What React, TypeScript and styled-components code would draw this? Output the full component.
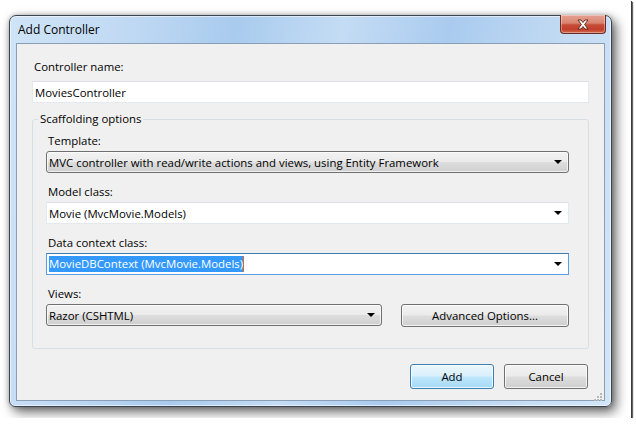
import React from 'react';
import styled, { createGlobalStyle } from 'styled-components';

const GlobalStyle = createGlobalStyle`
  html, body {
    margin: 0;
    padding: 0;
    background: #ffffff;
  }
  body {
    font-family: "Open Sans", "Noto Sans", "Liberation Sans", sans-serif;
    font-size: 11.4px;
    color: #000000;
  }
`;

const Stage = styled.div`
  box-sizing: border-box;
  width: 631px;
  height: 418px;
  padding: 15px 0 0 9px;
  background: #ffffff;
  box-shadow: 1px 1px 0 #3a3a3a, 2px 2px 1px rgba(0, 0, 0, 0.6);
`;

const Window = styled.div`
  box-sizing: border-box;
  width: 603px;
  height: 392px;
  display: flex;
  flex-direction: column;
  padding: 0 6px 5px 6px;
  border: 1px solid #3b4550;
  border-radius: 7px 7px 6px 6px;
  background: linear-gradient(
    100deg,
    #cfe4f7 0%,
    #c0d9f3 18%,
    #a9cbee 34%,
    #c4dcf4 50%,
    #aacbef 66%,
    #c3dbf3 84%,
    #d3e6f8 100%
  );
  box-shadow: inset 0 0 0 1px rgba(255, 255, 255, 0.55),
    4px 5px 12px rgba(0, 0, 0, 0.6), 0 0 5px rgba(0, 0, 0, 0.25);
`;

const TitleBar = styled.div`
  position: relative;
  height: 27px;
  display: flex;
  align-items: center;
  padding-left: 2px;
  font-size: 12px;
  color: #000000;
`;

const CloseButton = styled.div`
  position: absolute;
  top: -1px;
  right: -1px;
  width: 46px;
  height: 19px;
  box-sizing: border-box;
  display: flex;
  align-items: center;
  justify-content: center;
  border: 1px solid #6b2a22;
  border-top: none;
  border-radius: 0 0 4px 4px;
  background: linear-gradient(
    180deg,
    #e6a292 0%,
    #d98370 45%,
    #c54c36 55%,
    #c1402b 80%,
    #d4694f 100%
  );
  box-shadow: inset 0 0 0 1px rgba(255, 255, 255, 0.35);
`;

const Client = styled.div`
  box-sizing: border-box;
  flex: 1;
  display: flex;
  flex-direction: column;
  padding: 15px 15px 0 15px;
  background: #f0f0f0;
  border: 1px solid #8a9fb6;
`;

const Label = styled.div`
  height: 16px;
  line-height: 16px;
  padding-left: 2px;
  white-space: nowrap;
`;

const TextBox = styled.div`
  box-sizing: border-box;
  height: 22px;
  margin-top: 6px;
  display: flex;
  align-items: center;
  padding-left: 2px;
  background: #ffffff;
  border: 1px solid #e3e9ef;
  border-top-color: #dcdfe6;
  white-space: nowrap;
`;

const GroupBox = styled.fieldset`
  margin: 8px 0 0 0;
  padding: 6px 19px 21px 13px;
  border: 1px solid #d5dfe5;
  border-radius: 3px;
  display: flex;
  flex-direction: column;
  gap: 11px;
`;

const Legend = styled.legend`
  margin-left: -8px;
  padding: 0 2px;
  height: 16px;
  line-height: 16px;
`;

const Field = styled.div`
  display: flex;
  flex-direction: column;
  gap: 2px;
`;

const Combo = styled.div<{ $button?: boolean; $focused?: boolean }>`
  position: relative;
  box-sizing: border-box;
  height: 22px;
  display: flex;
  align-items: center;
  padding-left: 2px;
  white-space: nowrap;
  border: 1px solid ${(p) => (p.$button ? '#707070' : p.$focused ? '#569de5' : '#e3e9ef')};
  border-top-color: ${(p) => (p.$button ? '#707070' : p.$focused ? '#3d7bad' : '#dcdfe6')};
  border-radius: ${(p) => (p.$button ? '3px' : '0')};
  background: ${(p) =>
    p.$button
      ? 'linear-gradient(180deg, #f2f2f2 0%, #ebebeb 48%, #dddddd 52%, #cfcfcf 100%)'
      : '#ffffff'};
  box-shadow: ${(p) => (p.$button ? 'inset 0 0 0 1px rgba(255,255,255,0.7)' : 'none')};
`;

const Arrow = styled.span`
  position: absolute;
  right: 6px;
  top: 50%;
  margin-top: -2px;
  width: 0;
  height: 0;
  border-left: 4px solid transparent;
  border-right: 4px solid transparent;
  border-top: 4px solid #000000;
`;

const Selected = styled.span`
  background: #3399ff;
  color: #ffffff;
  line-height: 16px;
  border-right: 1px solid #d86a1a;
`;

const ViewsRow = styled.div`
  display: grid;
  grid-template-columns: 336px 1fr;
  gap: 19px;
`;

const PushButton = styled.div<{ $default?: boolean }>`
  box-sizing: border-box;
  height: 23px;
  display: flex;
  align-items: center;
  justify-content: center;
  border: 1px solid ${(p) => (p.$default ? '#3c7fb1' : '#707070')};
  border-radius: 3px;
  background: ${(p) =>
    p.$default
      ? 'linear-gradient(180deg, #eaf6fd 0%, #d9f0fc 48%, #bee6fd 52%, #a7d9f5 100%)'
      : 'linear-gradient(180deg, #f2f2f2 0%, #ebebeb 48%, #dddddd 52%, #cfcfcf 100%)'};
  box-shadow: inset 0 0 0 1px rgba(255, 255, 255, 0.75);
`;

const Footer = styled.div`
  position: relative;
  margin-top: 15px;
  display: flex;
  justify-content: flex-end;
  gap: 10px;
  padding-right: 1px;
`;

const DialogButton = styled(PushButton)`
  width: 84px;
  height: 25px;
`;

const Grip = styled.svg`
  position: absolute;
  right: -14px;
  bottom: -13px;
`;

const CloseIcon = () => (
  <svg width="14" height="11" viewBox="0 0 14 11">
    <path
      d="M2 1 L5 1 L7 3.5 L9 1 L12 1 L8.6 5.5 L12 10 L9 10 L7 7.5 L5 10 L2 10 L5.4 5.5 Z"
      fill="#ffffff"
      stroke="#5a1e16"
      strokeWidth="0.9"
      strokeLinejoin="round"
    />
  </svg>
);

const SizeGrip = () => (
  <Grip width="10" height="10" viewBox="0 0 10 10">
    {[
      [7, 1],
      [4, 4],
      [7, 4],
      [1, 7],
      [4, 7],
      [7, 7],
    ].map(([x, y]) => (
      <rect key={`${x}-${y}`} x={x} y={y} width="2" height="2" fill="#b8b8b8" />
    ))}
  </Grip>
);

const App = () => {
  return (
    <>
      <GlobalStyle />
      <Stage>
        <Window>
          <TitleBar>
            Add Controller
            <CloseButton>
              <CloseIcon />
            </CloseButton>
          </TitleBar>
          <Client>
            <Label>Controller name:</Label>
            <TextBox>MoviesController</TextBox>
            <GroupBox>
              <Legend>Scaffolding options</Legend>
              <Field>
                <Label>Template:</Label>
                <Combo $button>
                  MVC controller with read/write actions and views, using Entity Framework
                  <Arrow />
                </Combo>
              </Field>
              <Field>
                <Label>Model class:</Label>
                <Combo>
                  Movie (MvcMovie.Models)
                  <Arrow />
                </Combo>
              </Field>
              <Field>
                <Label>Data context class:</Label>
                <Combo $focused>
                  <Selected>MovieDBContext (MvcMovie.Models)</Selected>
                  <Arrow />
                </Combo>
              </Field>
              <Field>
                <Label>Views:</Label>
                <ViewsRow>
                  <Combo $button>
                    Razor (CSHTML)
                    <Arrow />
                  </Combo>
                  <PushButton>Advanced Options...</PushButton>
                </ViewsRow>
              </Field>
            </GroupBox>
            <Footer>
              <DialogButton $default>Add</DialogButton>
              <DialogButton>Cancel</DialogButton>
              <SizeGrip />
            </Footer>
          </Client>
        </Window>
      </Stage>
    </>
  );
};

export default App;
